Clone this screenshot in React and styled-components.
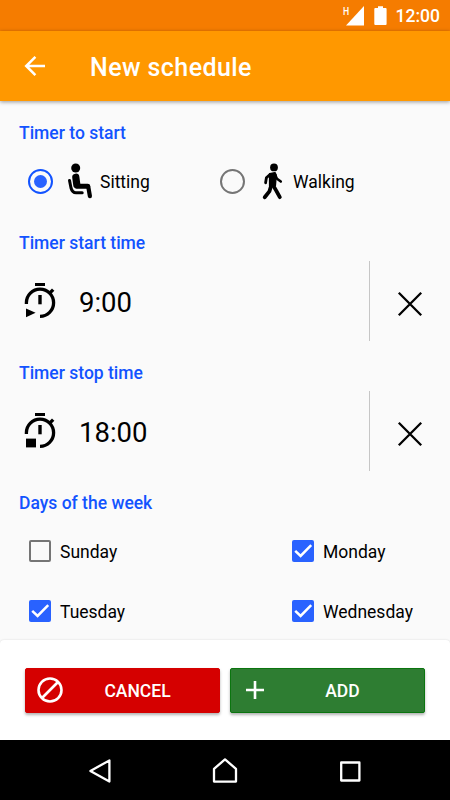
import styled, { createGlobalStyle } from 'styled-components';

const GlobalStyle = createGlobalStyle`
  * {
    box-sizing: border-box;
  }

  body {
    margin: 0;
    background: #fafafa;
    font-family: Roboto, 'Noto Sans', sans-serif;
    overflow: hidden;
  }
`;

const DAYS = [
  { name: 'Sunday', checked: false },
  { name: 'Monday', checked: true },
  { name: 'Tuesday', checked: true },
  { name: 'Wednesday', checked: true },
];

const SittingIcon = () => (
  <Icon width="30" height="40" viewBox="0 0 30 40">
    <circle cx="10.7" cy="7" r="4.5" fill="#000" />
    <g fill="none" stroke="#000" strokeLinecap="round" strokeLinejoin="round">
      <path d="M10.8 16.2L11.8 23.8" strokeWidth="7.2" />
      <path d="M12.5 25.2H22.6" strokeWidth="5" />
      <path d="M23.2 25.4L24.9 35.2" strokeWidth="4.2" />
      <path d="M4.5 19.4L6 27Q7.3 31.7 11 31.7H17.2" strokeWidth="3" />
    </g>
  </Icon>
);

const WalkingIcon = () => (
  <Icon width="26" height="40" viewBox="0 0 26 40">
    <circle cx="14" cy="6.4" r="3.9" fill="#000" />
    <path d="M9.6 12.6L15 11.6L16.2 14L15.4 24.5L9.6 25Z" fill="#000" stroke="#000" strokeWidth="1.4" strokeLinejoin="round" />
    <g fill="none" stroke="#000" strokeLinecap="round" strokeLinejoin="round">
      <path d="M10 13.4L6.4 16.8L5.6 21.8" strokeWidth="2.8" />
      <path d="M15 13.6L17 17.8L20.8 20.6" strokeWidth="2.5" />
      <path d="M11.2 24.5L9.4 30.4L4.7 36.2" strokeWidth="3.8" />
      <path d="M13.2 24.5L16.2 29.6L19.8 36.2" strokeWidth="3.8" />
    </g>
  </Icon>
);

const TimerIcon = ({ type }) => (
  <Icon width="33" height="40" viewBox="0 0 33 40">
    <path d="M11 2H21V5H11Z" fill="#000" />
    <path d="M14.3 14H17.7V23.3H14.3Z" fill="#000" />
    <path d="M2.4 23V21.8A13.6 13.6 0 1 1 16 35.4" fill="none" stroke="#000" strokeWidth="3.3" />
    <path d="M25.4 12.4L29.2 8.6" stroke="#000" strokeWidth="3.4" />
    {type === 'start' ? (
      <path d="M2 27.6L11.6 31.8L2 36.2Z" fill="#000" />
    ) : (
      <path d="M2 27.6H12V36.4H2Z" fill="#000" />
    )}
  </Icon>
);

const TimeRow = ({ type, time }) => (
  <TimeLine>
    <TimeValue>
      <TimerIcon type={type} />
      <span>{time}</span>
    </TimeValue>
    <ClearButton aria-label="Clear">
      <Icon width="26" height="26" viewBox="0 0 26 26">
        <path d="M1.8 1.8L24.2 24.2M24.2 1.8L1.8 24.2" stroke="#000" strokeWidth="2.3" />
      </Icon>
    </ClearButton>
  </TimeLine>
);

const App = () => {
  return (
    <Screen>
      <GlobalStyle />
      <StatusBar>
        <Network width="9" height="12" viewBox="0 0 9 12">
          <text x="1" y="10" fontSize="11.5" fontWeight="500" fill="#fff" textLength="6.2" lengthAdjust="spacingAndGlyphs">
            H
          </text>
        </Network>
        <Icon width="18" height="20" viewBox="0 0 18 20">
          <path d="M18 0V19.6H0Z" fill="#fff" />
        </Icon>
        <Battery width="13" height="20" viewBox="0 0 13 20">
          <path d="M4 0.3H9V2H11.6Q12.6 2 12.6 3V18Q12.6 19 11.6 19H1.3Q0.3 19 0.3 18V3Q0.3 2 1.3 2H4Z" fill="#fff" />
        </Battery>
        <Clock>12:00</Clock>
      </StatusBar>
      <AppBar>
        <Icon width="22" height="22" viewBox="0 0 22 22">
          <path d="M21 11H2.5M11.4 1.8L2.2 11L11.4 20.2" fill="none" stroke="#fff" strokeWidth="2.5" />
        </Icon>
        <Title>New schedule</Title>
      </AppBar>

      <Content>
        <Label>Timer to start</Label>
        <RadioRow>
          <Option $width={192}>
            <Radio $checked />
            <SittingIcon />
            <OptionText $gap={5}>Sitting</OptionText>
          </Option>
          <Option>
            <Radio />
            <WalkingSlot>
              <WalkingIcon />
            </WalkingSlot>
            <OptionText $gap={6}>Walking</OptionText>
          </Option>
        </RadioRow>

        <Label>Timer start time</Label>
        <TimeRow type="start" time="9:00" />

        <Label>Timer stop time</Label>
        <TimeRow type="stop" time="18:00" />

        <Label>Days of the week</Label>
        <DayGrid>
          {DAYS.map(day => (
            <Day key={day.name}>
              <Checkbox $checked={day.checked}>
                {day.checked && (
                  <Icon width="22" height="22" viewBox="0 0 22 22">
                    <path d="M3.2 10.8L8.6 16L19.2 5.2" fill="none" stroke="#fff" strokeWidth="2.5" />
                  </Icon>
                )}
              </Checkbox>
              {day.name}
            </Day>
          ))}
        </DayGrid>
      </Content>

      <Footer>
        <ActionButton $color="#d50000" $edge="#d50000">
          <Icon width="30" height="30" viewBox="0 0 30 30">
            <path d="M7 23L23 7" stroke="#fff" strokeWidth="2.6" />
            <circle cx="15" cy="15" r="11.5" fill="none" stroke="#fff" strokeWidth="2.6" />
          </Icon>
          <ActionText>CANCEL</ActionText>
        </ActionButton>
        <ActionButton $color="#2e7d32" $edge="#0b750f">
          <Icon width="30" height="30" viewBox="0 0 30 30">
            <path d="M6 15H24M15 6V24" stroke="#fff" strokeWidth="2.6" />
          </Icon>
          <ActionText>ADD</ActionText>
        </ActionButton>
      </Footer>

      <NavBar>
        <Icon width="26" height="26" viewBox="0 0 26 26">
          <path d="M3.4 13L22.4 2.4V23.6Z" fill="none" stroke="#fff" strokeWidth="2.3" strokeLinejoin="round" />
        </Icon>
        <Icon width="26" height="26" viewBox="0 0 26 26">
          <path d="M13 1.4L24 10.8V23.6H2V10.8Z" fill="none" stroke="#fff" strokeWidth="2.3" strokeLinejoin="round" />
        </Icon>
        <Icon width="26" height="26" viewBox="0 0 26 26">
          <path d="M4.2 4.5H22.4V22.5H4.2Z" fill="none" stroke="#fff" strokeWidth="2.3" strokeLinejoin="round" />
        </Icon>
      </NavBar>
    </Screen>
  );
};

const Icon = styled.svg`
  display: block;
  flex: none;
`;

const Screen = styled.div`
  display: flex;
  flex-direction: column;
  width: 450px;
  height: 800px;
  background: #fafafa;
  color: #000;
`;

const StatusBar = styled.div`
  display: flex;
  flex: none;
  align-items: center;
  justify-content: flex-end;
  height: 31px;
  padding-right: 10px;
  background: #f57c00;
  color: #fff;
`;

const Network = styled(Icon)`
  align-self: flex-start;
  margin: 5px -5px 0 0;
`;

const Battery = styled(Icon)`
  margin: 0 9px 0 10px;
`;

const Clock = styled.span`
  font-size: 17.5px;
  font-weight: 500;
  line-height: 31px;
  padding-top: 2px;
`;

const AppBar = styled.header`
  display: flex;
  flex: none;
  align-items: center;
  height: 70px;
  padding-left: 24px;
  background: #ff9800;
  color: #fff;
  box-shadow: 0 1px 4px rgba(0, 0, 0, 0.4);
`;

const Title = styled.h1`
  margin: 2px 0 0 44px;
  font-size: 25px;
  font-weight: 500;
  letter-spacing: 0.42px;
`;

const Content = styled.main`
  flex: none;
  height: 539px;
  overflow: hidden;
`;

const Label = styled.h2`
  height: 20px;
  margin: 22px 0 8px 19px;
  color: #1253ff;
  font-size: 17.5px;
  font-weight: 500;
  line-height: 20px;
`;

const RadioRow = styled.div`
  display: flex;
  height: 60px;
  padding-left: 27.5px;
`;

const Option = styled.label`
  display: flex;
  align-items: center;
  width: ${props => (props.$width ? `${props.$width}px` : 'auto')};
`;

const Radio = styled.span`
  display: flex;
  align-items: center;
  justify-content: center;
  width: 25px;
  height: 25px;
  margin-right: 12.5px;
  border: 2.5px solid ${props => (props.$checked ? '#1253ff' : '#757575')};
  border-radius: 50%;

  &::after {
    content: '';
    width: 13px;
    height: 13px;
    border-radius: 50%;
    background: ${props => (props.$checked ? '#2962ff' : 'transparent')};
  }
`;

const WalkingSlot = styled.span`
  padding: 0 1px 0 3px;
`;

const OptionText = styled.span`
  margin-left: ${props => props.$gap}px;
  padding-top: 1px;
  font-size: 17.5px;
`;

const TimeLine = styled.div`
  display: flex;
  height: 80px;
`;

const TimeValue = styled.div`
  display: flex;
  flex: none;
  align-items: center;
  gap: 22px;
  width: 369px;
  padding-left: 24px;
  font-size: 27.5px;

  span {
    padding-top: 3px;
  }
`;

const ClearButton = styled.button`
  display: flex;
  flex: 1;
  align-items: center;
  justify-content: center;
  padding: 5px 0 0;
  border: 0;
  border-left: 1px solid #c6c6c6;
  background: none;
`;

const DayGrid = styled.div`
  display: grid;
  grid-template-columns: 263px 1fr;
  grid-auto-rows: 60px;
  padding-left: 29px;
`;

const Day = styled.label`
  display: flex;
  align-items: center;
  gap: 9px;
  font-size: 17.5px;
  padding-top: 1px;
`;

const Checkbox = styled.span`
  display: flex;
  align-items: center;
  justify-content: center;
  width: 22px;
  height: 22px;
  margin-top: -1px;
  border: ${props => (props.$checked ? '0' : '2px solid #757575')};
  border-radius: 2px;
  background: ${props => (props.$checked ? '#2962ff' : 'transparent')};
`;

const Footer = styled.footer`
  display: flex;
  flex: none;
  align-items: center;
  gap: 10px;
  height: 100px;
  padding: 0 25px;
  border-radius: 4px 4px 0 0;
  background: #fff;
  box-shadow: 0 0 2px rgba(0, 0, 0, 0.15);
`;

const ActionButton = styled.button`
  display: flex;
  flex: 1;
  align-items: center;
  height: 45px;
  padding: 0 0 0 9px;
  border: 1px solid ${props => props.$edge};
  border-radius: 2px;
  background: ${props => props.$color};
  color: #fff;
  font-family: inherit;
  box-shadow: 0 2px 3px rgba(0, 0, 0, 0.3);
`;

const ActionText = styled.span`
  flex: 1;
  padding-right: 9px;
  padding-top: 1px;
  font-size: 17.5px;
  font-weight: 500;
  text-align: center;
`;

const NavBar = styled.nav`
  display: flex;
  flex: none;
  align-items: center;
  justify-content: space-between;
  height: 60px;
  padding: 2px 87px 0;
  background: #000;
`;

export default App;
